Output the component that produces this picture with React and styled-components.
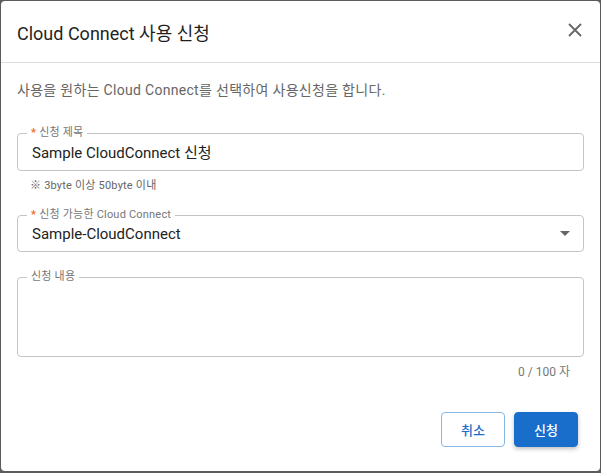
import styled, { createGlobalStyle } from "styled-components";

const GlobalStyle = createGlobalStyle`
  html, body {
    margin: 0;
    padding: 0;
    background: #5c5c5c;
    font-family: "Roboto", "Noto Sans CJK KR", sans-serif;
  }
  * {
    box-sizing: border-box;
  }
`;

const Dialog = styled.div`
  margin: 1px;
  width: 599px;
  height: 470px;
  background: #fff;
  border-radius: 4px;
  display: flex;
  flex-direction: column;
  overflow: hidden;
`;

const Header = styled.div`
  height: 62px;
  padding: 0 13px 0 16px;
  display: flex;
  align-items: center;
  justify-content: space-between;
  border-bottom: 1px solid #dedede;
`;

const Title = styled.h2`
  margin: 0;
  font-size: 18px;
  font-weight: 400;
  color: #1f1f1f;
`;

const CloseButton = styled.button`
  width: 24px;
  height: 24px;
  padding: 0;
  border: none;
  background: none;
  display: flex;
  align-items: center;
  justify-content: center;
  margin-top: -4px;
  cursor: pointer;
`;

const Body = styled.div`
  padding: 17px 16px 0 16px;
  display: flex;
  flex-direction: column;
`;

const Description = styled.p`
  margin: 0 0 27px 0;
  font-size: 14px;
  line-height: 20px;
  letter-spacing: 0.3px;
  color: #666;
`;

const Field = styled.fieldset`
  margin: 0;
  padding: 0 13px ${(props) => props.$padBottom || "6px"} 13px;
  border: 1px solid #c4c4c4;
  border-radius: 4px;
  min-width: 0;
`;

const Legend = styled.legend`
  margin-left: -4px;
  padding: 0 4px;
  font-size: 11px;
  line-height: 12px;
  letter-spacing: 0.2px;
  color: #777;
`;

const Required = styled.span`
  color: #f26b21;
  margin-right: 3px;
  font-weight: 700;
`;

const Input = styled.div`
  height: ${(props) => props.$height || "25px"};
  padding-left: 1px;
  display: flex;
  align-items: center;
  font-size: 15px;
  color: #222;
`;

const SelectValue = styled(Input)`
  justify-content: space-between;
`;

const Arrow = styled.span`
  width: 0;
  height: 0;
  border-left: 5px solid transparent;
  border-right: 5px solid transparent;
  border-top: 5px solid #666;
`;

const Helper = styled.div`
  margin: 8px 0 17px 13px;
  font-size: 11px;
  line-height: 13px;
  letter-spacing: 0.2px;
  color: #666;
`;

const Spacer = styled.div`
  height: ${(props) => props.$h};
`;

const Counter = styled.div`
  margin-top: 8px;
  padding-right: 14px;
  text-align: right;
  font-size: 12px;
  line-height: 14px;
  color: #777;
`;

const Footer = styled.div`
  margin-top: auto;
  padding: 0 22px 24px 0;
  display: flex;
  justify-content: flex-end;
  gap: 9px;
`;

const Button = styled.button`
  width: 64px;
  height: 35px;
  border-radius: 4px;
  font-family: inherit;
  font-size: 13px;
  font-weight: 500;
  cursor: pointer;
  border: 1px solid ${(props) => (props.$primary ? "#1a6ecb" : "#86b5e6")};
  background: ${(props) => (props.$primary ? "#1a6ecb" : "#fff")};
  color: ${(props) => (props.$primary ? "#fff" : "#1a6ecb")};
  box-shadow: ${(props) => (props.$primary ? "0 2px 4px rgba(0,0,0,0.25)" : "none")};
`;

const CloseIcon = () => (
  <svg width="14" height="14" viewBox="0 0 14 14">
    <path d="M1 1 L13 13 M13 1 L1 13" stroke="#666" strokeWidth="1.8" fill="none" />
  </svg>
);

export default function App() {
  return (
    <>
      <GlobalStyle />
      <Dialog>
        <Header>
          <Title>Cloud Connect 사용 신청</Title>
          <CloseButton>
            <CloseIcon />
          </CloseButton>
        </Header>
        <Body>
          <Description>사용을 원하는 Cloud Connect를 선택하여 사용신청을 합니다.</Description>
          <Field>
            <Legend>
              <Required>*</Required>신청 제목
            </Legend>
            <Input>Sample CloudConnect 신청</Input>
          </Field>
          <Helper>※ 3byte 이상 50byte 이내</Helper>
          <Field $padBottom="5px">
            <Legend>
              <Required>*</Required>신청 가능한 Cloud Connect
            </Legend>
            <SelectValue>
              Sample-CloudConnect
              <Arrow />
            </SelectValue>
          </Field>
          <Spacer $h="19px" />
          <Field $padBottom="0">
            <Legend>신청 내용</Legend>
            <Input $height="73px" />
          </Field>
          <Counter>0 / 100 자</Counter>
        </Body>
        <Footer>
          <Button>취소</Button>
          <Button $primary>신청</Button>
        </Footer>
      </Dialog>
    </>
  );
}
